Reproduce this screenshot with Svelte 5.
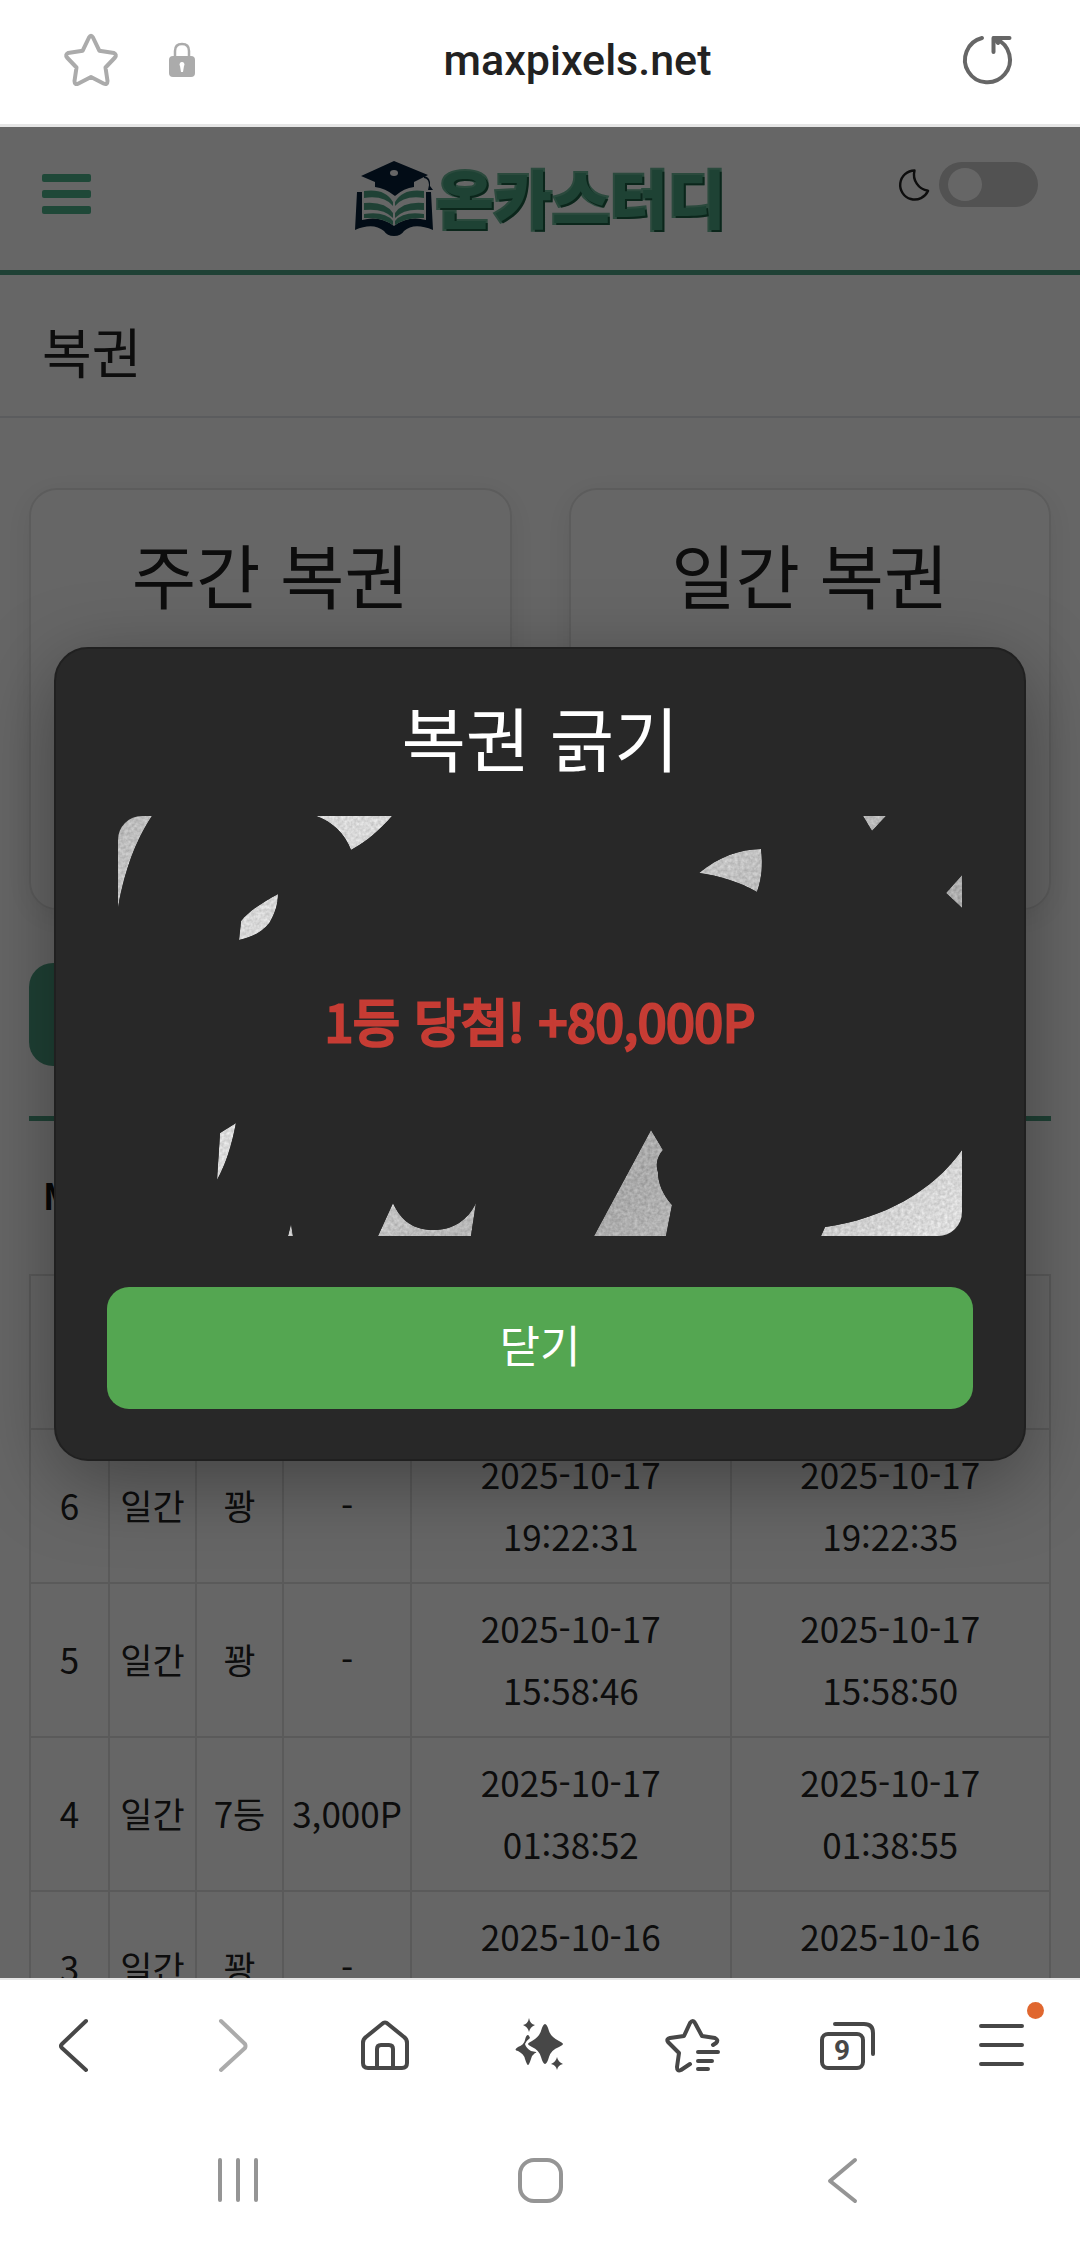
<script lang="ts">
  type Draw = { id: number; kind: string; result: string; prize: string; bought: string[]; scratched: string[] };

  const lotteries = ['주간 복권', '일간 복권'];
  const columns = ['#', '종류', '결과', '당첨금', '구매일', '확인일'];

  const draws: Draw[] = [
    { id: 6, kind: '일간', result: '꽝', prize: '-', bought: ['2025-10-17', '19:22:31'], scratched: ['2025-10-17', '19:22:35'] },
    { id: 5, kind: '일간', result: '꽝', prize: '-', bought: ['2025-10-17', '15:58:46'], scratched: ['2025-10-17', '15:58:50'] },
    { id: 4, kind: '일간', result: '7등', prize: '3,000P', bought: ['2025-10-17', '01:38:52'], scratched: ['2025-10-17', '01:38:55'] },
    { id: 3, kind: '일간', result: '꽝', prize: '-', bought: ['2025-10-16', '\u00a0'], scratched: ['2025-10-16', '\u00a0'] },
  ];

  // what is left of the silver coating
  const flakes = [
    'M0 0H34C22 18 8 46 0 92Z',
    'M198 0C215 6 227 18 233 34C248 26 262 14 274 0Z',
    'M745 0L754 15L768 0Z',
    'M581 57C600 41 622 33 643 33C645 48 644 62 639 76C622 66 602 60 581 57Z',
    'M844 59L828 77L844 92Z',
    'M160 78C145 86 131 95 123 105L121 124C138 120 146 114 152 106C157 97 160 88 160 78Z',
    'M118 307L102 317L99 364C108 348 114 328 118 307Z',
    'M170 420L173 408L175 420Z',
    'M260 420L275 387C283 405 296 414 315 414C335 414 350 404 358 387L353 420Z',
    'M476 420L533 314L545 334C538 342 538 350 540 356C540 366 544 378 554 389L548 420Z',
    'M703 420L707 411C765 403 815 375 844 334V420Z',
  ];

  let open = $state(true);
  let dark = $state(false);
</script>

<div class="browser" lang="ko">
  <div class="address">
    <button class="plain" aria-label="북마크">
      <svg width="58" height="56" viewBox="0 0 58 56"><path d="M31 5.500L37.300 18.700L52 21Q55 22.500 53 25.500L43.500 35.500L45.500 49Q45.500 53.500 41.500 51.500L29 45L16.500 51.500Q12.500 53.500 12.500 49L14.500 35.500L5 25.500Q3 22.500 6 21L20.700 18.700L27 5.500Q29 2 31 5.500Z" fill="none" stroke="#ababab" stroke-width="4" stroke-linejoin="round" /></svg>
    </button>
    <svg width="26" height="36" viewBox="0 0 26 36"><path d="M6 16V9Q6 2 13 2Q20 2 20 9V16" fill="none" stroke="#ababab" stroke-width="2.500" /><rect y="14" width="26" height="21" rx="4" fill="#ababab" /><path d="M13 20a2.500 2.500 0 0 1 2 4l-1 6h-2l-1-6a2.500 2.500 0 0 1 2-4z" fill="#fff" /></svg>
    <span class="host">maxpixels.net</span>
    <button class="plain" aria-label="새로고침">
      <svg width="58" height="56" viewBox="0 0 58 56" fill="none" stroke="#666" stroke-width="4" stroke-linecap="round" stroke-linejoin="round"><path d="M22 6A22.500 22.500 0 1 0 36 7" /><path d="M33.500 20V6H49.500" /><path d="M34 6H40L38 11Z" fill="#666" /></svg>
    </button>
  </div>

  <div class="page">
    <header>
      <button class="plain burger" aria-label="메뉴"><i></i><i></i><i></i></button>
      <a class="logo" href="/">
        <svg width="80" height="78" viewBox="0 0 80 78">
          <g fill="#071f38">
            <path d="M3 32H8V60Q26 55 40 66Q54 55 72 60V32H77L79 70Q60 62 50 71Q47 76 40 76Q33 76 30 71Q19 62 1 70Z" />
            <path d="M7 16L40 1L74 15L60 22V27Q50 28 41 36Q31 28 21 27V22Z" />
            <path d="M70 16Q77 17 76 26L79 30H74L75 25Q75 19 70 18Z" />
          </g>
          <ellipse cx="40" cy="13" rx="4" ry="3" fill="#fff" />
          <g fill="#4fa486">
            <path d="M10 31Q31 28 39 42V46Q30 35 10 38Z" /><path d="M10 43Q31 41 39 53V58Q30 48 10 50Z" /><path d="M10 54Q31 51 39 61V65Q28 57 10 58Z" />
            <path d="M70 31Q49 28 41 42V46Q50 35 70 38Z" /><path d="M70 43Q49 41 41 53V58Q50 48 70 50Z" /><path d="M70 54Q49 51 41 61V65Q52 57 70 58Z" />
          </g>
        </svg>
        <span>온카스터디</span>
      </a>
      <label class="theme">
        <svg width="34" height="36" viewBox="0 0 34 36"><path d="M17 3A15 15 0 1 0 31 24A17 17 0 0 1 17 3Z" fill="none" stroke="#222" stroke-width="2.500" stroke-linejoin="round" /></svg>
        <input type="checkbox" role="switch" aria-label="다크 모드" bind:checked={dark} />
      </label>
    </header>

    <h1>복권</h1>

    <main>
      <div class="cards">
        {#each lotteries as name}
          <section class="card"><h2>{name}</h2></section>
        {/each}
      </div>
      <button class="buy" aria-label="복권 구매"></button>
      <h3>My 복권</h3>
      <table>
        <colgroup><col class="w1" /><col class="w2" /><col class="w2" /><col class="w3" /><col /><col /></colgroup>
        <thead>
          <tr>{#each columns as c}<th aria-label={c}></th>{/each}</tr>
        </thead>
        <tbody>
          {#each draws as d}
            <tr>
              <td>{d.id}</td>
              <td>{d.kind}</td>
              <td>{d.result}</td>
              <td>{d.prize}</td>
              <td>{d.bought[0]}<br />{d.bought[1]}</td>
              <td>{d.scratched[0]}<br />{d.scratched[1]}</td>
            </tr>
          {/each}
        </tbody>
      </table>
    </main>

    {#if open}
      <div class="overlay">
        <div class="modal" role="dialog" aria-modal="true" aria-labelledby="scratch-title">
          <h2 id="scratch-title">복권 긁기</h2>
          <div class="ticket">
            <svg viewBox="0 0 844 420" preserveAspectRatio="none" aria-hidden="true">
              <defs>
                <linearGradient id="silver" gradientUnits="userSpaceOnUse" x1="0" y1="0" x2="632" y2="632">
                  <stop offset="0" stop-color="#bdbdbd" /><stop offset=".18" stop-color="#dadada" /><stop offset=".36" stop-color="#dedede" /><stop offset=".7" stop-color="#acacac" /><stop offset="1" stop-color="#e2e2e2" />
                </linearGradient>
                <filter id="grain" x="0" y="0" width="100%" height="100%" color-interpolation-filters="sRGB">
                  <feTurbulence type="fractalNoise" baseFrequency=".3" numOctaves="2" result="n" />
                  <feColorMatrix in="n" values="1 0 0 0 0 1 0 0 0 0 1 0 0 0 0 0 0 0 0 1" result="g" />
                  <feComposite in="SourceGraphic" in2="g" operator="arithmetic" k2="1" k3=".24" k4="-.13" result="m" />
                  <feComposite in="m" in2="SourceGraphic" operator="in" />
                </filter>
              </defs>
              <g fill="url(#silver)" filter="url(#grain)">
                {#each flakes as d}<path {d} />{/each}
              </g>
            </svg>
            <p>1등 당첨! +80,000P</p>
          </div>
          <button class="close" onclick={() => (open = false)}>닫기</button>
        </div>
      </div>
    {/if}
  </div>

  <nav class="toolbar">
    <button class="plain" aria-label="뒤로"><svg width="72" height="72" viewBox="0 0 72 72"><path d="M45 11L21 34Q19 36 21 38L45 60" /></svg></button>
    <button class="plain off" aria-label="앞으로"><svg width="72" height="72" viewBox="0 0 72 72"><path d="M26 11L50 34Q51 36 50 38L26 60" /></svg></button>
    <button class="plain" aria-label="홈"><svg width="72" height="72" viewBox="0 0 72 72"><path d="M32 14Q35 11 38 14L54 27Q57 29 57 33V53Q57 58 52 58H18Q13 58 13 53V33Q13 29 16 27Z" /><path d="M27 58V39Q27 35 31 35H39Q43 35 43 39V58" /></svg></button>
    <button class="plain" aria-label="AI"><svg class="solid" width="72" height="72" viewBox="0 0 72 72"><path d="M41 14Q43 14 45 21Q47 27 55 31Q59 33 59 34Q59 35 55 37Q47 40 45 47Q43 54 41 54Q39 54 37 47Q35 40 28 37Q24 35 24 34Q24 33 28 31Q35 27 37 21Q39 14 41 14Z" /><path d="M24 25Q25 25 26 28Q22 31 21 34Q22 38 27 41L32 42Q33 43 31 43Q28 45 27 49Q25 55 24 55Q23 55 21 49Q20 44 14 41Q9 40 14 37Q20 35 21 30Q22 25 24 25Z" /><path d="M25 8Q26 14 31 15Q26 17 25 22Q24 17 19 15Q24 14 25 8Z" /><path d="M53 47Q54 52 59 54Q54 55 53 60Q52 55 47 54Q52 52 53 47Z" /></svg></button>
    <button class="plain" aria-label="북마크 목록"><svg width="72" height="72" viewBox="0 0 72 72"><path d="M55 35L58 33Q61 30 57 28L44 26L37 13Q35 9 32 13L26 26L12 28Q8 29 10 32L21 43L19 57Q19 62 23 60L32 54" /><path d="M40 42H60M40 51H54M40 59H50" /></svg></button>
    <button class="plain" aria-label="탭 9개"><svg width="72" height="72" viewBox="0 0 72 72"><rect x="9" y="24" width="41" height="34" rx="6" /><path d="M22 14H51Q60 14 60 23V44" /></svg><b>9</b></button>
    <button class="plain" aria-label="더보기"><svg width="72" height="72" viewBox="0 0 72 72"><path d="M14 16H55M14 35H55M14 54H55" /></svg><i class="dot"></i></button>
  </nav>

  <nav class="system">
    <button class="plain" aria-label="최근 앱"><svg width="60" height="60" viewBox="0 0 60 60"><path d="M12 10V50M30 10V50M48 10V50" /></svg></button>
    <button class="plain" aria-label="홈 화면"><svg width="60" height="60" viewBox="0 0 60 60"><rect x="10" y="10" width="41" height="41" rx="14" /></svg></button>
    <button class="plain" aria-label="이전"><svg width="60" height="60" viewBox="0 0 60 60"><path d="M43 10L18 31L43 51" /></svg></button>
  </nav>
</div>

<style>
  :global(body) { background: #fff; }
  .browser { display: flex; flex-direction: column; height: 100vh; font-family: "Noto Sans CJK KR", sans-serif; color: #222; }
  h1, h2, h3, p { margin: 0; font-weight: 400; }
  svg { display: block; }
  .plain { padding: 0; border: none; background: none; color: inherit; cursor: pointer; }

  .address { display: flex; align-items: center; gap: 49px; height: 120px; padding: 0 62px 4px; border-bottom: 3px solid #e6e6e6; }
  .address .plain, .address > svg { flex-shrink: 0; }
  .host { flex: 1; text-align: center; font: 500 43px/56px Roboto, sans-serif; }

  .page { position: relative; flex: 1; min-height: 0; overflow: hidden; background: #fff; }
  header { display: flex; align-items: center; justify-content: space-between; height: 143px; padding: 0 42px; border-bottom: 5px solid #4fa486; }
  .burger { display: flex; flex-direction: column; gap: 8px; width: 140px; padding-bottom: 10px; }
  .burger i { width: 49px; height: 8px; border-radius: 2px; background: #4fb48c; }
  .logo { display: flex; align-items: center; gap: 2px; text-decoration: none; }
  .logo span { padding-bottom: 6px; font-size: 63px; line-height: 70px; font-weight: 900; color: #4ba582; -webkit-text-stroke: 4px #6db89a; paint-order: stroke fill; text-shadow: 2px 2px 0 #1d5f45; }
  .theme { display: flex; align-items: center; justify-content: flex-end; gap: 8px; width: 140px; padding-bottom: 28px; }
  .theme input { appearance: none; flex-shrink: 0; width: 99px; height: 45px; margin: 0; padding: 6px 9px; border-radius: 23px; background: #ccc; }
  .theme input::before { content: ''; display: block; width: 34px; height: 33px; border-radius: 50%; background: #fff; }

  h1 { height: 141px; padding: 0 42px; border-bottom: 2px solid #e3e5ea; font-size: 54px; line-height: 152px; }
  main { padding: 70px 29px 0; }
  .cards { display: grid; grid-template-columns: 1fr 1fr; gap: 57px; }
  .card { height: 422px; box-sizing: border-box; padding-top: 32px; border: 2px solid #e6e6e6; border-radius: 28px; box-shadow: 0 6px 30px rgba(0, 0, 0, .08); }
  h2 { font-size: 70px; line-height: 104px; text-align: center; }
  .buy { display: block; width: 50%; height: 103px; margin-top: 53px; border: none; border-radius: 24px; background: #4fa486; }
  h3 { height: 153px; margin-top: 50px; padding: 0 14px; border-top: 5px solid #4fa486; color: #111; font-size: 36px; line-height: 146px; font-weight: 700; }

  table { width: 100%; table-layout: fixed; border-collapse: collapse; font-size: 35px; line-height: 62px; text-align: center; }
  th, td { height: 124px; padding: 13px 0 15px; border: 2px solid #e0e0e0; white-space: nowrap; }
  .w1 { width: 79px; }
  .w2 { width: 87px; }
  .w3 { width: 128px; }

  .overlay { position: absolute; inset: 0; display: flex; align-items: center; justify-content: center; padding-top: 2px; background: rgba(0, 0, 0, .6); }
  .modal { width: 90%; box-sizing: border-box; padding: 36px 51px 50px; border: 2px solid #202020; border-radius: 34px; background: #282828; color: #fff; box-shadow: 0 20px 80px rgba(0, 0, 0, .35); }
  .ticket { position: relative; display: grid; place-items: center; height: 420px; margin: 27px 11px 51px; border-radius: 24px; overflow: hidden; }
  .ticket svg { position: absolute; inset: 0; width: 100%; height: 100%; }
  .ticket p { padding-bottom: 12px; font-size: 51px; line-height: 60px; color: #c63c34; -webkit-text-stroke: 3px #c63c34; }
  .close { display: block; width: 100%; height: 122px; padding: 0 0 8px; border: none; border-radius: 22px; background: #54a651; color: #fff; font: 44px "Noto Sans CJK KR", sans-serif; cursor: pointer; }

  nav svg { fill: none; stroke: currentColor; stroke-linecap: round; stroke-linejoin: round; }
  .toolbar { display: flex; align-items: center; height: 132px; border-top: 2px solid #e6e6e6; color: #474747; }
  .toolbar .plain { position: relative; display: grid; place-items: center; flex: 1; }
  .toolbar svg { stroke-width: 4; }
  .toolbar .solid { fill: currentColor; stroke: none; }
  .toolbar .off { color: #ababab; }
  .toolbar b { position: absolute; inset: 5px 13px 0 0; font: 700 28px/72px Roboto, sans-serif; text-align: center; }
  .dot { position: absolute; top: -8px; left: calc(50% + 24px); width: 17px; height: 17px; border-radius: 50%; background: #e0672f; }
  .system { display: flex; align-items: center; height: 136px; padding: 0 8%; color: #959595; }
  .system .plain { display: grid; place-items: center; flex: 1; }
  .system svg { stroke-width: 4; }
</style>
